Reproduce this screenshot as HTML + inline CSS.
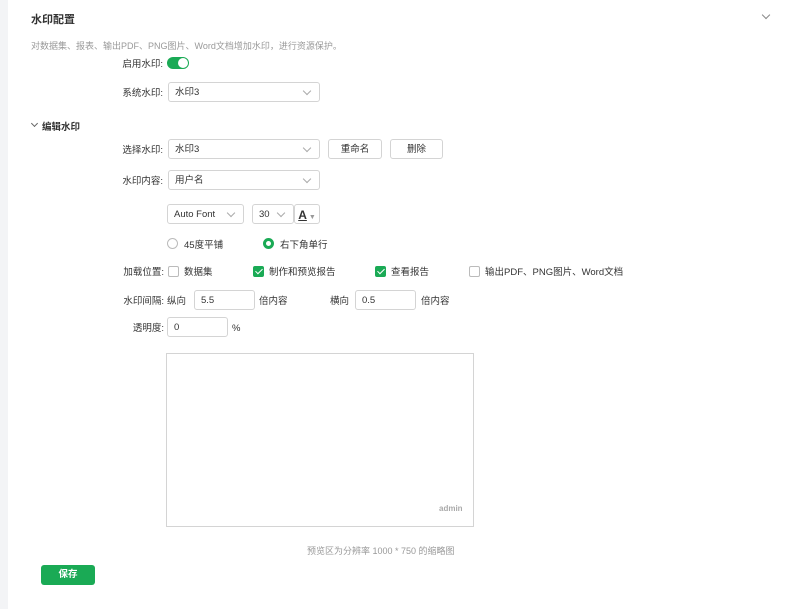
<!DOCTYPE html>
<html><head><meta charset="utf-8"><style>
*{box-sizing:border-box;margin:0;padding:0}
body{width:788px;height:609px;background:#fff;font-family:"Liberation Sans","Noto Sans CJK SC",sans-serif;font-size:9.5px;color:#333;position:relative;overflow:hidden}
.a{position:absolute;white-space:nowrap;line-height:18px;padding-top:2px}
.sel,.inp,.btn{position:absolute;border:1px solid #d4d4d4;border-radius:3px;background:#fff;height:20px;line-height:20px;padding-left:6px;font-size:9.5px;color:#333}
.sel:after{content:"";position:absolute;right:9px;top:5px;width:5px;height:5px;border-right:1px solid #aaa;border-bottom:1px solid #aaa;transform:rotate(45deg)}
.btn{text-align:center;padding:0}
.lbl{position:absolute;text-align:right;font-size:9.5px;color:#333;line-height:18px;white-space:nowrap;padding-top:2px}
.cb{position:absolute;width:11px;height:11px;border:1px solid #bbb;border-radius:2px;background:#fff}
.cb.on{background:#1aaa55;border-color:#1aaa55}
.cb.on:after{content:"";position:absolute;left:3px;top:0px;width:3px;height:6px;border-right:1.5px solid #fff;border-bottom:1.5px solid #fff;transform:rotate(45deg)}
</style></head><body>
<div class="a" style="left:0;top:0;width:8px;height:609px;background:#f3f4f6"></div>
<div class="a" style="left:31px;top:9px;font-size:11px;font-weight:bold;color:#333">水印配置</div>
<div class="a" style="left:763px;top:12px;width:6px;height:6px;border-right:1px solid #888;border-bottom:1px solid #888;transform:rotate(45deg);padding:0"></div>
<div class="a" style="left:31px;top:35px;color:#999;font-size:9px">对数据集、报表、输出PDF、PNG图片、Word文档增加水印，进行资源保护。</div>
<div class="lbl" style="left:100px;width:63px;top:54px">启用水印:</div>
<div class="a" style="left:167px;top:57px;width:22px;height:12px;border-radius:6px;background:#1aaa55;padding:0"><div class="a" style="left:11px;top:1px;width:10px;height:10px;border-radius:5px;background:#fff;padding:0"></div></div>
<div class="lbl" style="left:100px;width:63px;top:83px">系统水印:</div>
<div class="sel" style="left:168px;top:82px;width:152px">水印3</div>
<div class="a" style="left:32px;top:121px;width:5px;height:5px;border-right:1px solid #666;border-bottom:1px solid #666;transform:rotate(45deg);padding:0"></div>
<div class="a" style="left:42px;top:117px;font-weight:bold;font-size:9.5px">编辑水印</div>
<div class="lbl" style="left:100px;width:63px;top:140px">选择水印:</div>
<div class="sel" style="left:168px;top:139px;width:152px">水印3</div>
<div class="btn" style="left:328px;top:139px;width:54px">重命名</div>
<div class="btn" style="left:390px;top:139px;width:53px">删除</div>
<div class="lbl" style="left:100px;width:63px;top:171px">水印内容:</div>
<div class="sel" style="left:168px;top:170px;width:152px">用户名</div>
<div class="sel" style="left:167px;top:204px;width:77px">Auto Font</div>
<div class="sel" style="left:252px;top:204px;width:42px">30</div>
<div class="btn" style="left:294px;top:204px;width:26px"><span style="font-weight:bold;text-decoration:underline;font-size:12px">A</span><span style="color:#999;font-size:7px"> ▼</span></div>
<div class="a" style="left:167px;top:238px;width:11px;height:11px;border:1px solid #bbb;border-radius:50%;padding:0"></div>
<div class="a" style="left:184px;top:235px">45度平铺</div>
<div class="a" style="left:263px;top:238px;width:11px;height:11px;border:3.5px solid #1aaa55;border-radius:50%;padding:0"></div>
<div class="a" style="left:280px;top:235px">右下角单行</div>
<div class="lbl" style="left:100px;width:64px;top:262px">加载位置:</div>
<div class="cb" style="left:168px;top:266px"></div><div class="a" style="left:184px;top:262px">数据集</div>
<div class="cb on" style="left:253px;top:266px"></div><div class="a" style="left:269px;top:262px">制作和预览报告</div>
<div class="cb on" style="left:375px;top:266px"></div><div class="a" style="left:391px;top:262px">查看报告</div>
<div class="cb" style="left:469px;top:266px"></div><div class="a" style="left:485px;top:262px">输出PDF、PNG图片、Word文档</div>
<div class="lbl" style="left:100px;width:64px;top:291px">水印间隔:</div>
<div class="a" style="left:167px;top:291px">纵向</div>
<div class="inp" style="left:194px;top:290px;width:61px">5.5</div>
<div class="a" style="left:259px;top:291px">倍内容</div>
<div class="a" style="left:330px;top:291px">横向</div>
<div class="inp" style="left:355px;top:290px;width:61px">0.5</div>
<div class="a" style="left:421px;top:291px">倍内容</div>
<div class="lbl" style="left:100px;width:64px;top:318px">透明度:</div>
<div class="inp" style="left:167px;top:317px;width:61px">0</div>
<div class="a" style="left:232px;top:318px">%</div>
<div class="a" style="left:166px;top:353px;width:308px;height:174px;border:1px solid #d4d4d4;padding:0"></div>
<div class="a" style="left:439px;top:498px;font-size:8px;color:#aaa;font-weight:bold">admin</div>
<div class="a" style="left:307px;top:540px;color:#999;font-size:9px">预览区为分辨率 1000 * 750 的缩略图</div>
<div class="a" style="left:41px;top:565px;width:54px;height:20px;border-radius:3px;background:#1aaa55;color:#fff;text-align:center;line-height:20px;font-weight:bold;padding:0">保存</div>
</body></html>
